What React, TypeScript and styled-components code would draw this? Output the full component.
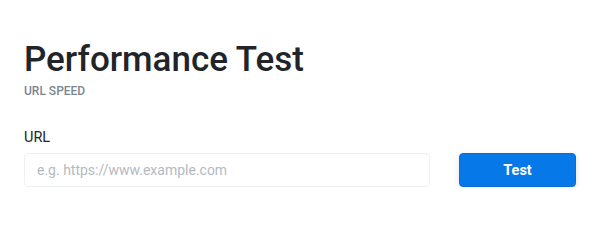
import React from 'react'
import styled, { createGlobalStyle } from 'styled-components'

const GlobalStyle = createGlobalStyle`
  body {
    margin: 0;
    background: #fff;
    font-family: Roboto, "Liberation Sans", Arial, sans-serif;
    color: #212529;
  }
`;

const Page = styled.div`
  padding: 39px 24px 0 24px;
`;

const Title = styled.h1`
  margin: 0;
  font-size: 35px;
  line-height: 42px;
  font-weight: 500;
  color: #212529;
`;

const Subtitle = styled.div`
  margin-top: 3px;
  font-size: 12px;
  line-height: 15px;
  font-weight: 500;
  color: #7b8591;
  text-transform: uppercase;
`;

const Label = styled.label`
  display: block;
  margin-top: 30px;
  font-size: 14.5px;
  line-height: 17px;
  color: #212529;
`;

const Row = styled.div`
  display: flex;
  align-items: center;
  gap: 29px;
  margin-top: 7px;
`;

const UrlInput = styled.input`
  flex: 0 0 406px;
  box-sizing: border-box;
  height: 34px;
  padding: 0 12px;
  border: 1px solid #eef0f2;
  border-radius: 4px;
  font-family: inherit;
  font-size: 14px;
  color: #212529;
  outline: none;

  &::placeholder {
    color: #b4bac1;
  }
`;

const TestButton = styled.button`
  box-sizing: border-box;
  width: 117px;
  height: 34px;
  border: 1px solid #0a6ed8;
  border-radius: 4px;
  background: #0678e8;
  color: #fff;
  font-family: inherit;
  font-size: 14.5px;
  font-weight: 700;
  box-shadow: 0 2px 6px rgba(0, 0, 0, 0.12);
  cursor: pointer;
`;

export default function App() {
  return <>
    <GlobalStyle />
    <Page>
      <Title>Performance Test</Title>
      <Subtitle>URL Speed</Subtitle>
      <Label>URL</Label>
      <Row>
        <UrlInput type='text' placeholder='e.g. https://www.example.com' />
        <TestButton>Test</TestButton>
      </Row>
    </Page>
  </>
}
